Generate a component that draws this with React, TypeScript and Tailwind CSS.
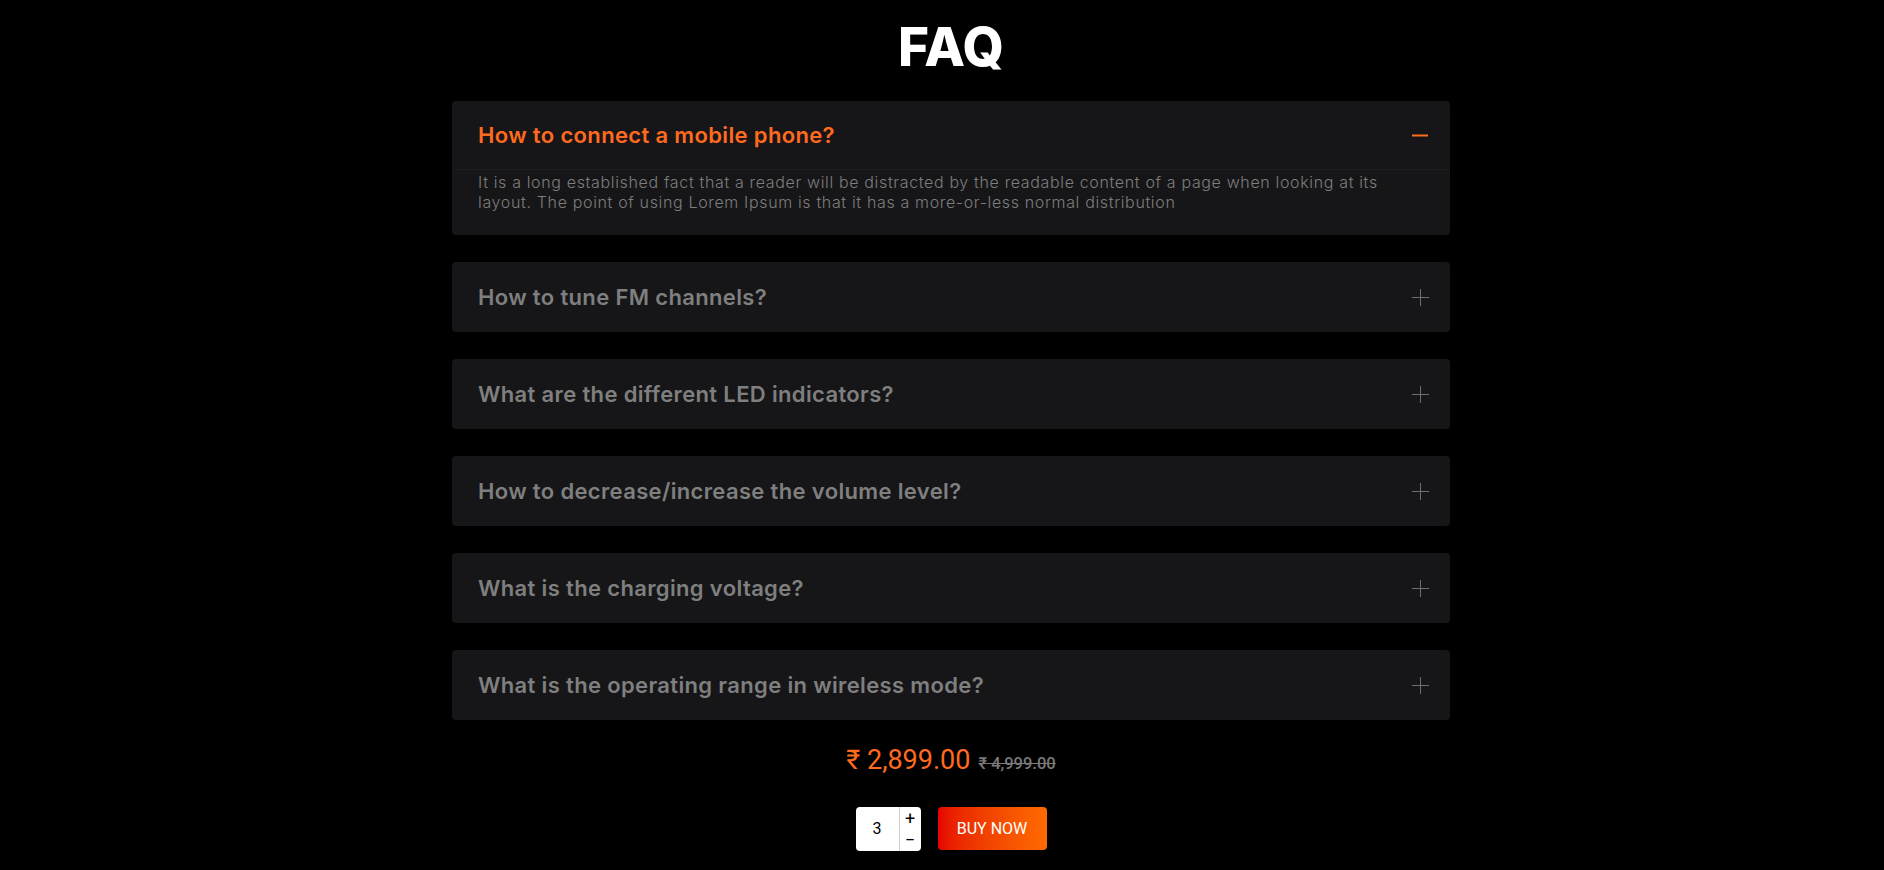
import { useState } from 'react';

const faqs = [
  {
    q: 'How to connect a mobile phone?',
    a: 'It is a long established fact that a reader will be distracted by the readable content of a page when looking at its layout. The point of using Lorem Ipsum is that it has a more-or-less normal distribution',
  },
  { q: 'How to tune FM channels?', a: '' },
  { q: 'What are the different LED indicators?', a: '' },
  { q: 'How to decrease/increase the volume level?', a: '' },
  { q: 'What is the charging voltage?', a: '' },
  { q: 'What is the operating range in wireless mode?', a: '' },
];

function PlusIcon() {
  return (
    <svg width="17" height="17" viewBox="0 0 17 17" fill="none">
      <path d="M8.5 0v17M0 8.5h17" stroke="#6e6e6e" strokeWidth="1" />
    </svg>
  );
}

function MinusIcon() {
  return (
    <svg width="17" height="17" viewBox="0 0 17 17" fill="none">
      <path d="M0 8.5h16" stroke="#ff6a1f" strokeWidth="2" />
    </svg>
  );
}

export default function App() {
  const [open, setOpen] = useState(0);
  const [qty, setQty] = useState(3);

  return (
    <div className="min-h-screen bg-black pl-[18px] flex flex-col items-center font-['Inter',sans-serif]">
      {/* Title */}
      <h1 className="mt-[22px] mb-[29px] h-[50px] leading-[50px] text-[53px] font-extrabold text-white">
        FAQ
      </h1>

      {/* Accordion */}
      <div className="w-[998px] flex flex-col gap-[27px]">
        {faqs.map((item, i) => {
          const isOpen = open === i;
          return (
            <div key={i} className="bg-[#161618] rounded-[4px]">
              <button
                onClick={() => setOpen(isOpen ? -1 : i)}
                className={
                  isOpen
                    ? 'w-full h-[69px] flex items-center justify-between pl-[26px] pr-[21px] border-b border-[#1c1c1f] text-left'
                    : 'w-full h-[70px] flex items-center justify-between pl-[26px] pr-[21px] text-left'
                }
              >
                <span
                  className={
                    isOpen
                      ? 'text-[22px] font-semibold text-[#ff6a1f] tracking-[0.35px]'
                      : 'text-[22px] font-semibold text-[#7f7f7f] tracking-[0.35px]'
                  }
                >
                  {item.q}
                </span>
                {isOpen ? <MinusIcon /> : <PlusIcon />}
              </button>
              {isOpen && (
                <p className="pl-[26px] pr-[40px] pt-[2px] pb-[23px] text-[16px] leading-[20px] font-light tracking-[0.65px] text-[#7d7d7d]">
                  {item.a}
                </p>
              )}
            </div>
          );
        })}
      </div>

      {/* Price */}
      <div className="mt-[25px] flex items-baseline gap-[8px] font-['Roboto',sans-serif]">
        <span className="text-[27px] leading-[30px] text-[#ff6a1f]">₹ 2,899.00</span>
        <span className="text-[16.5px] font-medium text-[#7a7a7a] line-through">₹ 4,999.00</span>
      </div>

      {/* Quantity + buy */}
      <div className="mt-[30px] flex items-center gap-[17px] font-['Roboto',sans-serif]">
        <div className="w-[65px] h-[44px] bg-white rounded-[4px] flex">
          <div className="w-[43px] flex items-center justify-center text-[16px] text-black">{qty}</div>
          <div className="w-[22px] border-l border-[#cfcfcf] flex flex-col items-center justify-center text-black leading-none">
            <button onClick={() => setQty(qty + 1)} className="h-[21px] text-[18px] leading-[21px]">
              +
            </button>
            <button onClick={() => setQty(Math.max(1, qty - 1))} className="h-[21px] text-[18px] leading-[21px]">
              −
            </button>
          </div>
        </div>
        <button className="w-[109px] h-[43px] rounded-[4px] bg-gradient-to-r from-[#e60000] to-[#ff6a00] text-white text-[16px]">
          BUY NOW
        </button>
      </div>
    </div>
  );
}
